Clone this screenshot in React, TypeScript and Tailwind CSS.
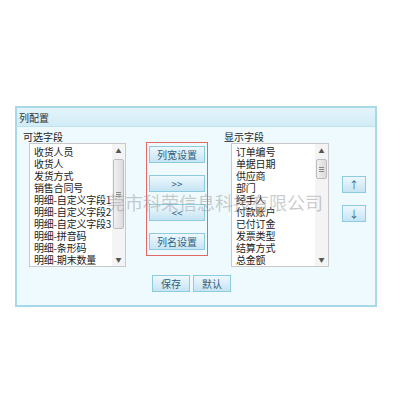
import React from 'react';

const leftFields = [
  '收货人员',
  '收货人',
  '发货方式',
  '销售合同号',
  '明细-自定义字段1',
  '明细-自定义字段2',
  '明细-自定义字段3',
  '明细-拼音码',
  '明细-条形码',
  '明细-期末数量',
];

const rightFields = [
  '订单编号',
  '单据日期',
  '供应商',
  '部门',
  '经手人',
  '付款账户',
  '已付订金',
  '发票类型',
  '结算方式',
  '总金额',
];

function Btn({ label, className = '' }: { label: string; className?: string }) {
  return (
    <button
      className={`flex items-center justify-center border border-[#8ccbe0] bg-gradient-to-b from-[#eef8fd] to-[#c6e4f3] text-[10px] leading-none text-[#2f5f80] ${className}`}
    >
      {label}
    </button>
  );
}

function ListBox({ items, thumbTop, thumbHeight }: { items: string[]; thumbTop: number; thumbHeight: number }) {
  return (
    <div className="relative flex h-[124px] border border-[#c9c9c9] bg-white">
      <ul className="flex-1 pl-[4px] pt-[2px]">
        {items.map((it) => (
          <li key={it} className="h-[12px] whitespace-nowrap text-[10px] leading-[12px] tracking-[-0.2px] text-[#222]">
            {it}
          </li>
        ))}
      </ul>
      <div className="relative w-[13px] bg-[#f4f4f4]">
        <div className="flex h-[13px] items-center justify-center text-[6px] text-[#555]">▲</div>
        <div
          className="absolute left-[1px] right-[1px] flex flex-col items-center justify-center gap-[1px] rounded-[2px] border border-[#bdbdbd] bg-gradient-to-r from-[#f0f0f0] to-[#dcdcdc]"
          style={{ top: thumbTop, height: thumbHeight }}
        >
          <div className="h-px w-[5px] bg-[#888]" />
          <div className="h-px w-[5px] bg-[#888]" />
          <div className="h-px w-[5px] bg-[#888]" />
        </div>
        <div className="absolute bottom-0 flex h-[13px] w-full items-center justify-center text-[6px] text-[#555]">▼</div>
      </div>
    </div>
  );
}

export default function App() {
  return (
    <div
      className="h-[400px] w-[400px] bg-white pl-[15px] pt-[106px]"
      style={{ fontFamily: '"Noto Sans CJK SC", "Noto Sans", sans-serif' }}
    >
      <div className="relative h-[201px] w-[362px] border-2 border-[#a7d9e8] bg-[#eefafd]">
        <div className="flex h-[19px] items-center border-b border-[#bfe3ef] bg-gradient-to-b from-[#e4f4fa] to-[#d2ecf6] pl-[2px] text-[10px] text-[#333]">
          列配置
        </div>

        <div className="flex items-start pt-[4px]">
          <div className="ml-[6px] flex flex-col">
            <div className="h-[12px] text-[10px] leading-[12px] text-[#222]">可选字段</div>
            <div className="ml-[6px] w-[97px]">
              <ListBox items={leftFields} thumbTop={15} thumbHeight={70} />
            </div>
          </div>

          <div className="ml-[20px] mt-[11px] flex h-[114px] w-[62px] flex-col items-center gap-[12px] border border-[#e06868] pt-[3px]">
            <Btn label="列宽设置" className="h-[17px] w-[56px] shrink-0" />
            <Btn label=">>" className="h-[17px] w-[56px] shrink-0 text-[8px]" />
            <Btn label="<<" className="h-[17px] w-[56px] shrink-0 text-[8px]" />
            <Btn label="列名设置" className="h-[17px] w-[56px] shrink-0" />
          </div>

          <div className="ml-[16px] flex flex-col">
            <div className="h-[12px] text-[10px] leading-[12px] text-[#222]">显示字段</div>
            <div className="ml-[7px] w-[98px]">
              <ListBox items={rightFields} thumbTop={15} thumbHeight={20} />
            </div>
          </div>

          <div className="ml-[13px] mt-[45px] flex flex-col gap-[12px]">
            <Btn label="↑" className="h-[17px] w-[24px]" />
            <Btn label="↓" className="h-[17px] w-[24px]" />
          </div>
        </div>

        <div className="mt-[8px] flex gap-[3px] pl-[135px]">
          <Btn label="保存" className="h-[17px] w-[38px]" />
          <Btn label="默认" className="h-[17px] w-[38px]" />
        </div>

        <div className="pointer-events-none absolute left-[90px] top-[85px] whitespace-nowrap text-[18px] leading-none text-[#9a9a9a]/50">
          莞市科荣信息科技有限公司
        </div>
      </div>
    </div>
  );
}
